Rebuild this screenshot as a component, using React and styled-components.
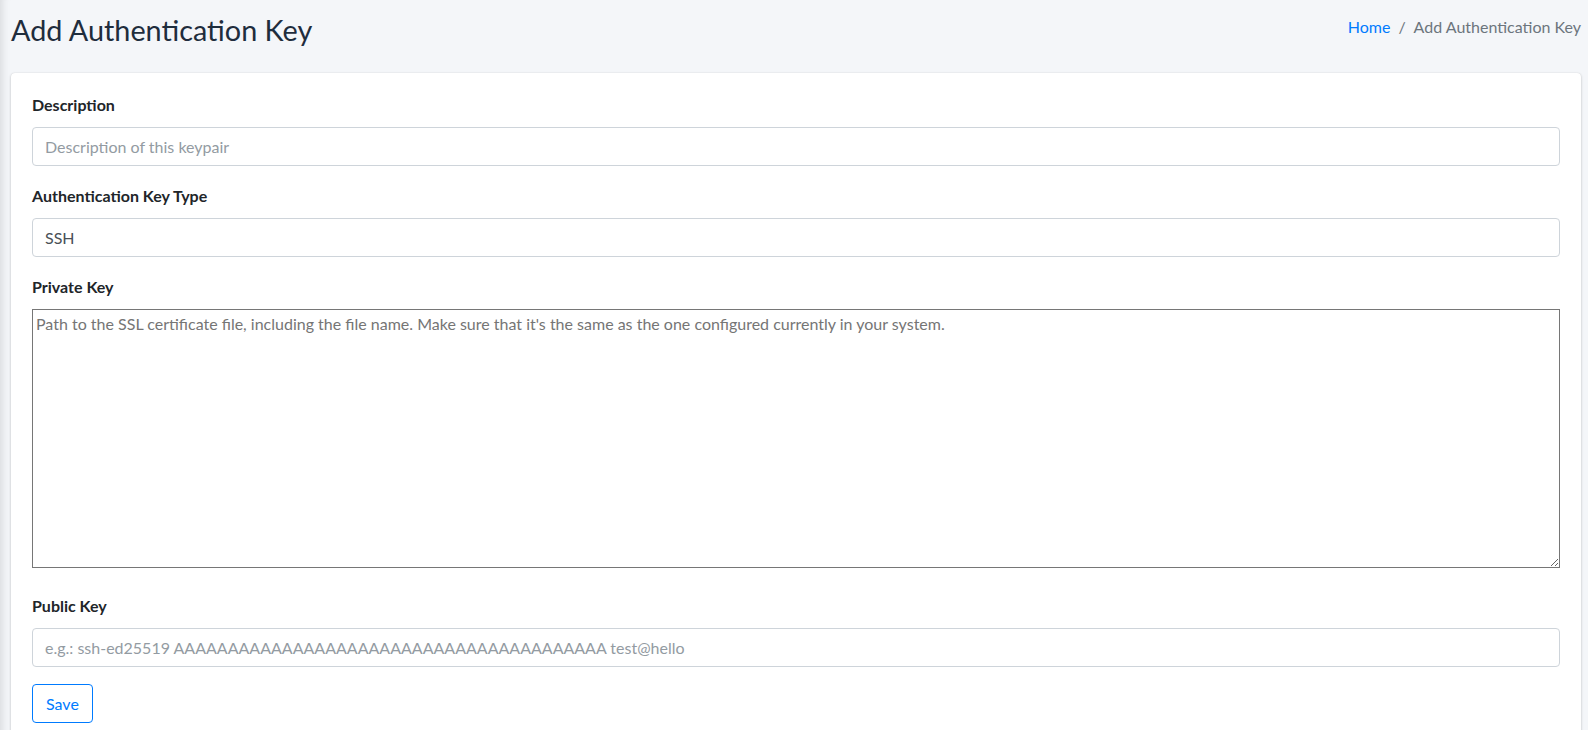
import React from "react";
import styled, { createGlobalStyle } from "styled-components";

const Global = createGlobalStyle`
  html, body { margin: 0; padding: 0; overflow: hidden; }
  body {
    background: #f4f6f9;
    font-family: Lato, "Liberation Sans", sans-serif;
    font-size: 16px;
    line-height: 1.5;
    color: #212529;
  }
  * { box-sizing: border-box; }
`;

const Page = styled.div`
  min-height: 730px;
  padding: 0 7px 0 11px;
  box-shadow: inset 10px 0 8px -8px rgba(0, 0, 0, 0.12);
`;

const Header = styled.header`
  display: flex;
  justify-content: space-between;
  align-items: flex-start;
  padding: 13px 0 26px;
`;

const Title = styled.h1`
  margin: 0;
  font-size: 28.8px;
  font-weight: 400;
  line-height: 34px;
  color: #1f2d3d;
`;

const Breadcrumb = styled.ol`
  display: flex;
  list-style: none;
  margin: 0;
  padding: 2px 0 0;
  font-size: 16px;
  line-height: 24px;
  color: #6c757d;
`;

const Crumb = styled.li`
  & + &::before {
    content: "/";
    padding: 0 8px;
    color: #6c757d;
  }
  a { color: #007bff; text-decoration: none; }
`;

const Card = styled.section`
  background: #fff;
  border-radius: 4px;
  box-shadow: 0 0 1px rgba(0, 0, 0, 0.125), 0 1px 3px rgba(0, 0, 0, 0.2);
  padding: 20px 21px 24px;
`;

const FormGroup = styled.div`
  margin-bottom: ${(p) => p.$gap ?? 18}px;
`;

const Label = styled.label`
  display: block;
  font-weight: 700;
  line-height: 24px;
  margin-bottom: 10px;
  color: #212529;
`;

const Input = styled.input`
  display: block;
  width: 100%;
  height: 39px;
  padding: 6px 12px;
  font-family: inherit;
  font-size: 16px;
  color: #495057;
  background: #fff;
  border: 1px solid #ced4da;
  border-radius: 4px;
  outline: none;
  &::placeholder { color: #939ba2; opacity: 1; }
`;

const TextArea = styled.textarea`
  display: block;
  width: 100%;
  height: 259px;
  padding: 2px 3px;
  font-family: inherit;
  font-size: 16px;
  line-height: 1.5;
  border: 1px solid #767676;
  border-radius: 0;
  outline: none;
  &::placeholder { color: #757575; opacity: 1; }
`;

const Button = styled.button`
  height: 39px;
  padding: 6px 13px;
  font-family: inherit;
  font-size: 16px;
  color: #007bff;
  background: transparent;
  border: 1px solid #007bff;
  border-radius: 4px;
  cursor: pointer;
`;

export default function App() {
  return (
    <>
      <Global />
      <Page>
        <Header>
          <Title>Add Authentication Key</Title>
          <Breadcrumb>
            <Crumb><a href="#">Home</a></Crumb>
            <Crumb>Add Authentication Key</Crumb>
          </Breadcrumb>
        </Header>
        <Card>
          <FormGroup>
            <Label>Description</Label>
            <Input placeholder="Description of this keypair" />
          </FormGroup>
          <FormGroup>
            <Label>Authentication Key Type</Label>
            <Input defaultValue="SSH" />
          </FormGroup>
          <FormGroup $gap={26}>
            <Label>Private Key</Label>
            <TextArea placeholder="Path to the SSL certificate file, including the file name. Make sure that it's the same as the one configured currently in your system." />
          </FormGroup>
          <FormGroup $gap={17}>
            <Label>Public Key</Label>
            <Input placeholder="e.g.: ssh-ed25519 AAAAAAAAAAAAAAAAAAAAAAAAAAAAAAAAAAAAAAAA test@hello" />
          </FormGroup>
          <Button type="button">Save</Button>
        </Card>
      </Page>
    </>
  );
}
